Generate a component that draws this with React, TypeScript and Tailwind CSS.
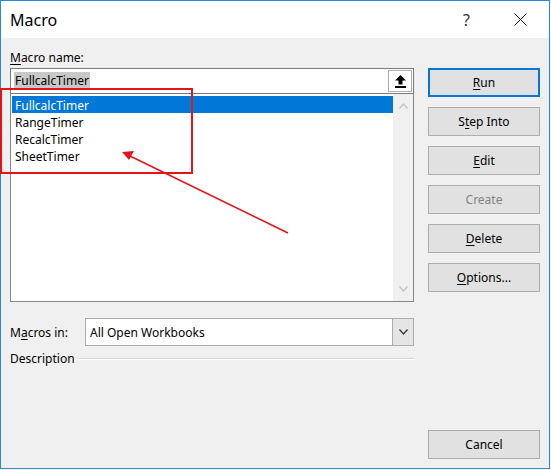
import React from 'react';

const font = { fontFamily: '"Noto Sans", "Open Sans", sans-serif' };

const macros = ['FullcalcTimer', 'RangeTimer', 'RecalcTimer', 'SheetTimer'];

type BtnProps = { label: string; hot?: number; primary?: boolean; disabled?: boolean };

// Underlines the access-key letter like a Win32 dialog button
const Accel: React.FC<{ text: string; hot?: number }> = ({ text, hot }) => {
  if (hot === undefined) return <>{text}</>;
  return (
    <>
      {text.slice(0, hot)}
      <span className="underline underline-offset-2">{text[hot]}</span>
      {text.slice(hot + 1)}
    </>
  );
};

const DialogButton: React.FC<BtnProps> = ({ label, hot, primary, disabled }) => (
  <button
    className={
      'w-[112px] h-[29px] bg-[#e1e1e1] text-[12px] leading-none flex items-center justify-center ' +
      (primary ? 'border-2 border-[#0078d7] ' : 'border border-[#adadad] ') +
      (disabled ? 'text-[#838383]' : 'text-[#000]')
    }
  >
    <Accel text={label} hot={hot} />
  </button>
);

const Chevron: React.FC<{ up?: boolean; color: string }> = ({ up, color }) => (
  <svg width="9" height="6" viewBox="0 0 9 6">
    <path d={up ? 'M0.5 5.5 L4.5 1 L8.5 5.5' : 'M0.5 0.5 L4.5 5 L8.5 0.5'} fill="none" stroke={color} strokeWidth="1.2" />
  </svg>
);

export default function App() {
  return (
    <div className="w-[551px] h-[470px] bg-[#f6f6f6]" style={font}>
      <div className="relative w-[550px] h-[469px] border border-[#2b88d8] bg-[#f0f0f0] flex flex-col">
        {/* title bar */}
        <div className="h-[37px] bg-white flex items-center shrink-0">
          <span className="ml-[9px] text-[16px] text-[#000]">Macro</span>
          <span className="ml-auto mr-[44px] text-[16px] text-[#333]">?</span>
          <svg width="13" height="13" viewBox="0 0 13 13" className="mr-[22px]">
            <path d="M0.5 0.5 L12.5 12.5 M12.5 0.5 L0.5 12.5" stroke="#111" strokeWidth="1" />
          </svg>
        </div>

        {/* body */}
        <div className="flex flex-1 pl-[9px] pr-[9px] pb-[9px]">
          <div className="w-[404px] flex flex-col">
            <div className="h-[20px] mt-[10px] text-[12px] leading-[20px] text-[#000]">
              <Accel text="Macro name:" hot={0} />
            </div>
            <div className="h-[26px] bg-white border border-[#7a7a7a] flex items-center">
              <span className="ml-[3px] px-px bg-[#c8c8c8] text-[12px] leading-[18px] text-[#000]">FullcalcTimer</span>
              <div className="ml-auto mr-px w-[24px] h-[22px] bg-white border border-[#adadad] flex items-center justify-center">
                <svg width="11" height="13" viewBox="0 0 11 13">
                  <path d="M5.5 0 L11 5.5 L7.5 5.5 L7.5 9.5 L3.5 9.5 L3.5 5.5 L0 5.5 Z" fill="#000" />
                  <rect x="0" y="11" width="11" height="2" fill="#000" />
                </svg>
              </div>
            </div>
            <div className="h-[208px] bg-white border border-t-0 border-[#828790] flex">
              <div className="flex-1 pt-[2px] pl-px">
                {macros.map((m, i) => (
                  <div
                    key={m}
                    className={
                      'h-[17px] pl-[3px] text-[12px] leading-[19px] ' +
                      (i === 0 ? 'bg-[#0078d7] text-white' : 'text-[#000]')
                    }
                  >
                    {m}
                  </div>
                ))}
              </div>
              <div className="w-[20px] bg-[#f0f0f0] flex flex-col items-center justify-between py-[9px]">
                <Chevron up color="#c2c2c2" />
                <Chevron color="#c2c2c2" />
              </div>
            </div>

            <div className="mt-[15px] flex items-center h-[29px]">
              <span className="w-[75px] pt-[2px] text-[12px] text-[#000]">
                <Accel text="Macros in:" hot={1} />
              </span>
              <div className="flex-1 h-[28px] bg-white border border-[#adadad] flex items-center">
                <span className="ml-[4px] pt-[2px] text-[12px] text-[#000]">All Open Workbooks</span>
                <div className="ml-auto w-[21px] h-full bg-[#e5e5e5] border-l border-[#adadad] flex items-center justify-center">
                  <Chevron color="#333" />
                </div>
              </div>
            </div>

            <div className="mt-[4px] flex items-center h-[17px]">
              <span className="text-[12px] text-[#000]">Description</span>
              <div className="flex-1 ml-[4px] h-[2px] border-t border-[#d5d5d5] border-b border-b-white" />
            </div>
          </div>

          <div className="ml-auto flex flex-col pt-[30px] gap-[10px]">
            <DialogButton label="Run" hot={0} primary />
            <DialogButton label="Step Into" hot={1} />
            <DialogButton label="Edit" hot={0} />
            <DialogButton label="Create" disabled />
            <DialogButton label="Delete" hot={0} />
            <DialogButton label="Options..." hot={0} />
            <div className="mt-auto">
              <DialogButton label="Cancel" />
            </div>
          </div>
        </div>

        {/* red annotation */}
        <svg className="absolute left-[-1px] top-[-1px] pointer-events-none" width="551" height="470" viewBox="0 0 551 470">
          <rect x="1" y="89" width="191" height="84" fill="none" stroke="#e3151a" strokeWidth="2" />
          <line x1="288" y1="233" x2="130" y2="156" stroke="#e3151a" strokeWidth="1.6" />
          <path d="M122 152 L134 151 L129 160 Z" fill="#e3151a" />
        </svg>
      </div>
    </div>
  );
}
